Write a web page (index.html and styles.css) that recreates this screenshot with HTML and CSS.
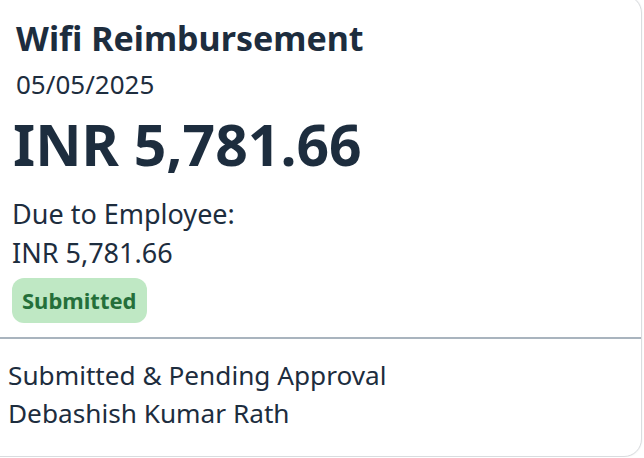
FILE: index.html
```html
<!DOCTYPE html>
<html>
<head>
<meta name="viewport" content="width=device-width, initial-scale=1">
<link rel="stylesheet" href="styles.css">
</head>
<body>

<div class="card">

  <div class="card-header">
    <div class="title">Wifi Reimbursement</div>
    <div class="date">05/05/2025</div>
  </div>

  <div class="card-content">
    <div class="amount">INR 5,781.66</div>
    <div class="line">Due to Employee:</div>
    <div class="line">INR 5,781.66</div>
    <span class="status">Submitted</span>
  </div>

  <div class="card-footer">
    <div class="line-sm">Submitted &amp; Pending Approval</div>
    <div class="line-sm">Debashish Kumar Rath</div>
  </div>

</div>

</body>
</html>
```

FILE: styles.css
```css
body {
  margin: 0;
  background: #fff;
  font-family: "Noto Sans", Arial, sans-serif;
  color: #1d2d3e;
  overflow: hidden;
}

/* The card is wider than the window, only its right side shows */
.card {
  box-sizing: border-box;
  width: 662px;
  margin: -5px 0 0 -20px;
  background: #fff;
  border: 1px solid #d9dcdf;
  border-radius: 18px;
  box-shadow: 0 0 2px rgba(0,0,0,0.08);
}

.card-header {
  padding: 22px 0 0 35px;
}

.title {
  font-size: 34px;
  font-weight: 700;
  line-height: 40px;
}

.date {
  margin-top: 10px;
  font-size: 26px;
  line-height: 32px;
}

.card-content {
  padding: 0 0 14px 31px;
  border-bottom: 2px solid #a9b4be;
}

.amount {
  margin: 12px 0 18px 1px;
  font-size: 57px;
  font-weight: 700;
  line-height: 64px;
}

.line {
  font-size: 27px;
  line-height: 39px;
}

.status {
  display: inline-block;
  margin-top: 6px;
  padding: 0 10px;
  height: 45px;
  line-height: 45px;
  background: #bfe8c4;
  color: #256f3a;
  border-radius: 12px;
  font-size: 22px;
  font-weight: 700;
}

.card-footer {
  padding: 17px 0 24px 27px;
}

.line-sm {
  font-size: 26.2px;
  line-height: 38px;
}
```
